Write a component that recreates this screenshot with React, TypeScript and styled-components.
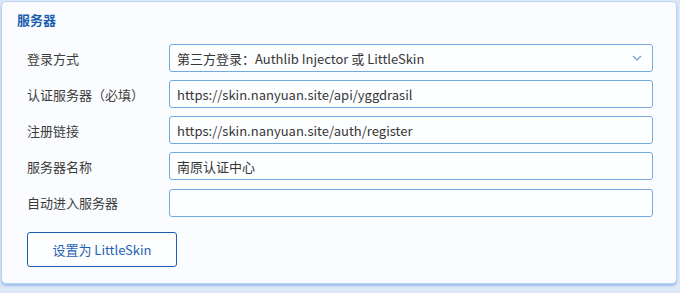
import React from 'react'
import styled, { createGlobalStyle } from 'styled-components'

const GlobalStyle = createGlobalStyle`
  html, body {
    margin: 0;
    padding: 0;
    background: #dde8f7;
    font-family: "Noto Sans CJK SC", "Noto Sans", sans-serif;
  }
`

const Page = styled.div`
  width: 680px;
  height: 293px;
  padding: 1px 0 0 1px;
  box-sizing: border-box;
`

const Card = styled.section`
  width: 676px;
  height: 283px;
  box-sizing: border-box;
  background: #fbfcff;
  border: 1px solid #b9d4f3;
  border-radius: 5px;
  box-shadow: 0 2px 2px rgba(110, 160, 225, 0.55);
  padding: 8px 23px 0 15px;
`

const Title = styled.h2`
  margin: 0 0 14px;
  font-size: 13px;
  line-height: 20px;
  font-weight: 700;
  color: #1b5fb0;
`

const Form = styled.div`
  display: grid;
  grid-template-columns: 142px 1fr;
  row-gap: 8px;
  padding-left: 10px;
`

const Label = styled.label`
  display: flex;
  align-items: center;
  height: 28px;
  font-size: 13px;
  color: #3c3c3c;
`

const Field = styled.div<{ $last?: boolean }>`
  position: relative;
  display: flex;
  align-items: center;
  height: 28px;
  box-sizing: border-box;
  border: 1px solid #74a9e2;
  border-radius: 3px;
  background: #fdfeff;
  padding: 0 7px;
  font-size: 13px;
  color: #363636;
  margin-top: ${(p) => (p.$last ? '1px' : '0')};
`

const Chevron = styled.svg`
  position: absolute;
  right: 10px;
  top: 50%;
  margin-top: -3px;
`

const Actions = styled.div`
  padding: 15px 0 0 10px;
`

const Button = styled.button`
  width: 150px;
  height: 35px;
  box-sizing: border-box;
  border: 1px solid #1a5fb0;
  border-radius: 3px;
  background: #fdfeff;
  color: #1d62b3;
  font-family: inherit;
  font-size: 13px;
`

const rows = [
  { label: '登录方式', value: '第三方登录：Authlib Injector 或 LittleSkin', select: true },
  { label: '认证服务器（必填）', value: 'https://skin.nanyuan.site/api/yggdrasil' },
  { label: '注册链接', value: 'https://skin.nanyuan.site/auth/register' },
  { label: '服务器名称', value: '南原认证中心' },
  { label: '自动进入服务器', value: '' },
]

const App = () => {
  return (
    <Page>
      <GlobalStyle />
      <Card>
        <Title>服务器</Title>
        <Form>
          {rows.map((r, i) => (
            <React.Fragment key={r.label}>
              <Label>{r.label}</Label>
              <Field $last={i === rows.length - 1}>
                {r.value}
                {r.select && (
                  <Chevron width="10" height="6" viewBox="0 0 10 6">
                    <path d="M1 1l4 4 4-4" fill="none" stroke="#7ea6d3" strokeWidth="1.4" />
                  </Chevron>
                )}
              </Field>
            </React.Fragment>
          ))}
        </Form>
        <Actions>
          <Button>设置为 LittleSkin</Button>
        </Actions>
      </Card>
    </Page>
  )
}

export default App
